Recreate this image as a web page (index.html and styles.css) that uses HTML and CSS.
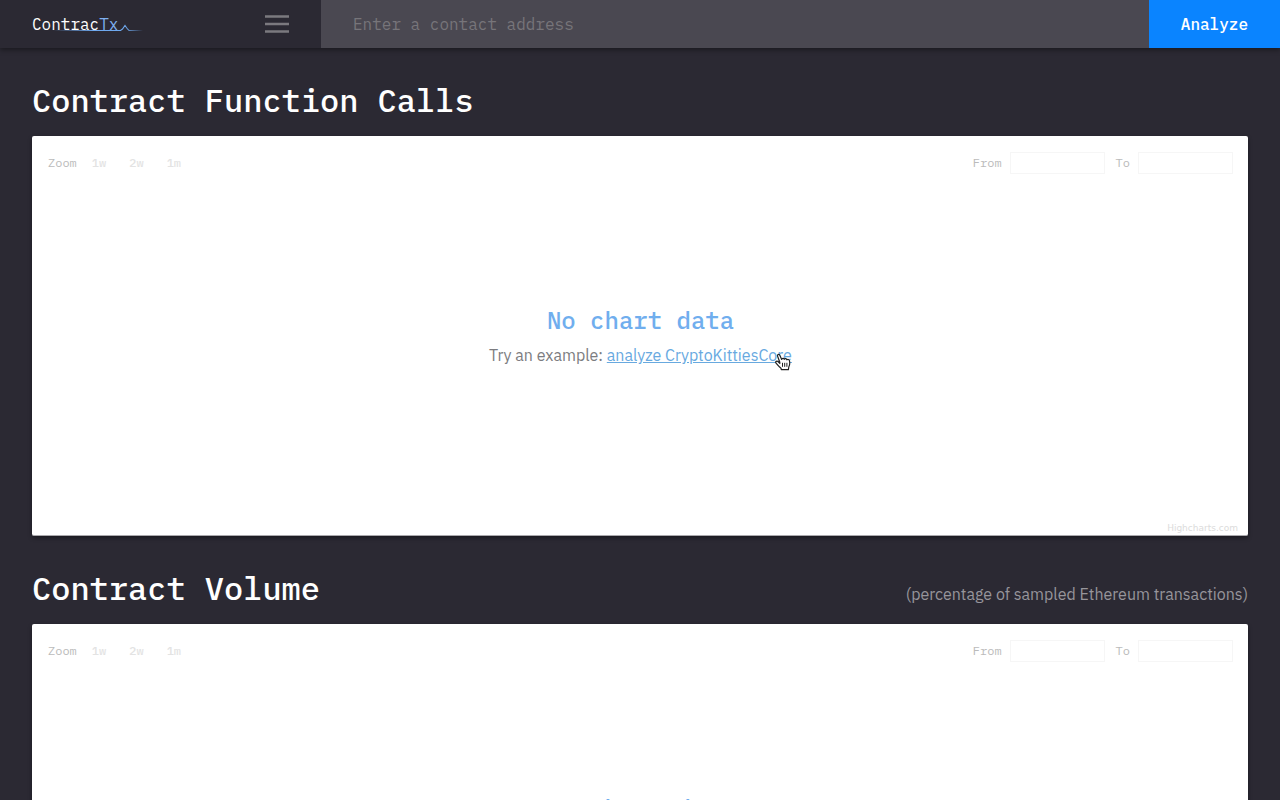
FILE: index.html
```html
<!DOCTYPE html>
<html lang="en">
<head>
<meta charset="utf-8">
<meta name="viewport" content="width=device-width, initial-scale=1">
<title>ContracTx</title>
<link rel="stylesheet" href="styles.css">
</head>
<body>
<header class="topbar">
  <div class="brand-area">
    <a class="brand" href="#"><span>Contrac<span class="brand-accent">Tx</span></span>
      <svg class="brand-line" viewBox="0 0 90 8" width="90" height="8" aria-hidden="true">
        <defs><linearGradient id="fade" gradientUnits="userSpaceOnUse" x1="0" y1="0" x2="90" y2="0"><stop offset="0" stop-color="#6ea8ee" stop-opacity="0"/><stop offset=".45" stop-color="#6ea8ee"/><stop offset=".8" stop-color="#6ea8ee"/><stop offset="1" stop-color="#6ea8ee" stop-opacity="0"/></linearGradient></defs>
        <path d="M0 6.5H67.5L69.5 5L72 1.5L74.5 5L76 6.5H90" fill="none" stroke="url(#fade)" stroke-width="1.1"/>
      </svg>
    </a>
    <button class="menu" type="button" aria-label="Menu">
      <svg viewBox="0 0 24 18" width="24" height="18" aria-hidden="true"><path d="M0 1.5H24M0 9H24M0 16.5H24" stroke="#7b797f" stroke-width="2.6"/></svg>
    </button>
  </div>
  <form class="search">
    <input class="address" type="text" placeholder="Enter a contact address" aria-label="Contact address">
    <button class="analyze" type="button">Analyze</button>
  </form>
</header>
<main class="page">
  <section class="panel">
    <div class="panel-head"><h1 class="title">Contract Function Calls</h1></div>
    <div class="chart">
      <div class="toolbar">
        <div class="ranges"><span class="zoom-label">Zoom</span><button class="range" type="button">1w</button><button class="range" type="button">2w</button><button class="range" type="button">1m</button></div>
        <div class="dates"><label for="calls-from">From</label><input class="date" id="calls-from" type="text"><label for="calls-to">To</label><input class="date" id="calls-to" type="text"></div>
      </div>
      <div class="empty">
        <h2 class="empty-title">No chart data</h2>
        <p class="hint">Try an example: <a class="example" href="#">analyze CryptoKittiesCore<svg class="pointer" viewBox="0 0 16 18" width="16" height="18" aria-hidden="true"><path d="M4.8 9.2L2.6 3.2C2.1 1.4 4 .7 4.8 2.3L6.7 6.4C7 5.2 8.8 5 9.3 6.3C9.9 5.3 11.5 5.5 11.9 6.8C12.8 6.1 14.2 6.5 14.5 7.8C15 10.2 14.9 12 13.8 14L13.4 16.6H6.3L6 15.2C4.2 13.8 2.6 11.9 .9 9.9C.2 8.6 1.8 7.6 3 8.5L4.8 10.4Z" fill="#fff" stroke="#222" stroke-width="1.2" stroke-linejoin="round"/><path d="M7.5 9.8V13.8M9.7 9.8V13.8M11.9 9.8V13.8" stroke="#222"/></svg></a></p>
      </div>
      <a class="credits" href="#">Highcharts.com</a>
    </div>
  </section>
  <section class="panel">
    <div class="panel-head"><h1 class="title">Contract Volume</h1><span class="note">(percentage of sampled Ethereum transactions)</span></div>
    <div class="chart">
      <div class="toolbar">
        <div class="ranges"><span class="zoom-label">Zoom</span><button class="range" type="button">1w</button><button class="range" type="button">2w</button><button class="range" type="button">1m</button></div>
        <div class="dates"><label for="volume-from">From</label><input class="date" id="volume-from" type="text"><label for="volume-to">To</label><input class="date" id="volume-to" type="text"></div>
      </div>
      <div class="empty">
        <h2 class="empty-title">No chart data</h2>
      </div>
      <a class="credits" href="#">Highcharts.com</a>
    </div>
  </section>
</main>
</body>
</html>
```
FILE: styles.css
```css
* { box-sizing: border-box; }
html { scrollbar-width: none; }
body { margin: 0; background: #2b2933; color: #fff; font: 16px/24px "IBM Plex Sans", Roboto, "Noto Sans", sans-serif; }
button, input { margin: 0; border: 0; background: none; padding: 0; color: inherit; font: inherit; }
h1, h2, p { margin: 0; }

.topbar, .title, .toolbar, .empty-title { font-family: "IBM Plex Mono", "Liberation Mono", monospace; }
.topbar { display: flex; height: 48px; background: #2b2933; box-shadow: 0 2px 5px rgba(0, 0, 0, .4); }
.brand-area { display: flex; flex: 0 0 321px; align-items: center; justify-content: space-between; padding: 0 32px; }
.brand { position: relative; color: #fff; text-decoration: none; }
.brand-accent { color: #7eb0f0; }
.brand-line { position: absolute; left: 21px; bottom: 4px; }
.menu { display: flex; }
.search { display: flex; flex: 1; }
.address { flex: 1; min-width: 0; padding: 0 32px; background: #4a4851; outline: 0; }
.address::placeholder { color: #77757a; opacity: 1; }
.analyze { padding: 0 32px; background: #0a84ff; font-weight: 500; }

.page { padding: 32px; display: grid; gap: 32px; }
.panel-head { display: flex; align-items: baseline; justify-content: space-between; margin-bottom: 16px; }
.title { font-size: 32px; line-height: 40px; font-weight: 500; }
.note { color: #97959b; font-size: 16px; }
.chart { display: flex; flex-direction: column; height: 400px; padding: 16px 15px 0 16px; border-radius: 2px; background: #fff; border-bottom: 1px solid #aaa9ad; box-shadow: 0 2px 4px rgba(0, 0, 0, .4); }
.toolbar { display: flex; justify-content: space-between; font-size: 12px; line-height: 22px; color: #bbb; }
.ranges, .dates { display: flex; align-items: center; }
.range { padding: 0 4px; margin-left: 15px; color: #e3e3e3; font-weight: 500; }
.zoom-label { margin-right: -4px; }
.date { width: 95px; height: 22px; margin: 0 11px 0 8px; border: 1px solid #f6f6f6; }
.date:last-child { margin-right: 0; }
.empty { flex: 1; padding-top: 130px; text-align: center; }
.empty-title { color: #70aeee; font-size: 24px; line-height: 32px; font-weight: 500; }
.hint { margin-top: 7px; color: #7c7c80; }
.example { position: relative; color: #68a9df; }
.pointer { position: absolute; right: 1px; top: 8px; }
.credits { align-self: flex-end; margin-right: -5px; color: #dcdcdc; font: 9px/14px "DejaVu Sans", sans-serif; text-decoration: none; }
```
